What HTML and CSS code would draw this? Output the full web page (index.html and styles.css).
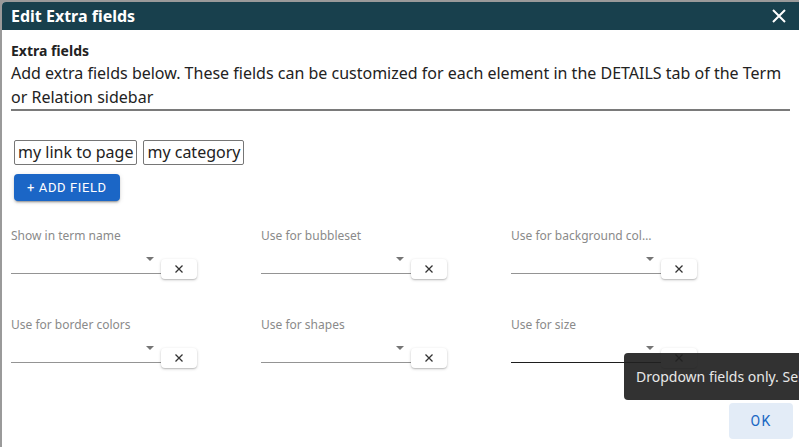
FILE: index.html
```html
<!DOCTYPE html>
<html lang="en">
<head>
<meta charset="utf-8">
<title>Edit Extra fields</title>
<link rel="stylesheet" href="styles.css">
</head>
<body>
<div class="dialog">
  <header class="titlebar">
    <h1 class="title">Edit Extra fields</h1>
    <button class="close" aria-label="Close">
      <svg width="14" height="14" viewBox="0 0 14 14"><path d="M1 1 L13 13 M13 1 L1 13" stroke="#fff" stroke-width="2" fill="none"/></svg>
    </button>
  </header>
  <main class="content">
    <div class="section-label">Extra fields</div>
    <p class="description">Add extra fields below. These fields can be customized for each element in the DETAILS tab of the Term or Relation sidebar</p>
    <div class="field-names">
      <span class="field-name">my link to page</span>
      <span class="field-name">my category</span>
    </div>
    <button class="add-field">+ ADD FIELD</button>
    <div class="mapping-grid">
      <div class="mapping">
        <label class="mapping-label">Show in term name</label>
        <div class="mapping-control">
          <div class="select"><span class="arrow"></span></div>
          <button class="clear" aria-label="Clear"><svg width="8" height="8" viewBox="0 0 8 8"><path d="M0.5 0.5 L7.5 7.5 M7.5 0.5 L0.5 7.5" stroke="#333" stroke-width="1.3" fill="none"/></svg></button>
        </div>
      </div>
      <div class="mapping">
        <label class="mapping-label">Use for bubbleset</label>
        <div class="mapping-control">
          <div class="select"><span class="arrow"></span></div>
          <button class="clear" aria-label="Clear"><svg width="8" height="8" viewBox="0 0 8 8"><path d="M0.5 0.5 L7.5 7.5 M7.5 0.5 L0.5 7.5" stroke="#333" stroke-width="1.3" fill="none"/></svg></button>
        </div>
      </div>
      <div class="mapping">
        <label class="mapping-label">Use for background colors</label>
        <div class="mapping-control">
          <div class="select"><span class="arrow"></span></div>
          <button class="clear" aria-label="Clear"><svg width="8" height="8" viewBox="0 0 8 8"><path d="M0.5 0.5 L7.5 7.5 M7.5 0.5 L0.5 7.5" stroke="#333" stroke-width="1.3" fill="none"/></svg></button>
        </div>
      </div>
      <div class="mapping">
        <label class="mapping-label">Use for border colors</label>
        <div class="mapping-control">
          <div class="select"><span class="arrow"></span></div>
          <button class="clear" aria-label="Clear"><svg width="8" height="8" viewBox="0 0 8 8"><path d="M0.5 0.5 L7.5 7.5 M7.5 0.5 L0.5 7.5" stroke="#333" stroke-width="1.3" fill="none"/></svg></button>
        </div>
      </div>
      <div class="mapping">
        <label class="mapping-label">Use for shapes</label>
        <div class="mapping-control">
          <div class="select"><span class="arrow"></span></div>
          <button class="clear" aria-label="Clear"><svg width="8" height="8" viewBox="0 0 8 8"><path d="M0.5 0.5 L7.5 7.5 M7.5 0.5 L0.5 7.5" stroke="#333" stroke-width="1.3" fill="none"/></svg></button>
        </div>
      </div>
      <div class="mapping">
        <label class="mapping-label">Use for size</label>
        <div class="mapping-control">
          <div class="select select-hover"><span class="arrow"></span></div>
          <button class="clear" aria-label="Clear"><svg width="8" height="8" viewBox="0 0 8 8"><path d="M0.5 0.5 L7.5 7.5 M7.5 0.5 L0.5 7.5" stroke="#333" stroke-width="1.3" fill="none"/></svg></button>
        </div>
      </div>
    </div>
  </main>
  <footer class="actions">
    <button class="ok">OK</button>
  </footer>
  <div class="tooltip" role="tooltip">Dropdown fields only. Select a field to use it here.</div>
</div>
</body>
</html>
```
FILE: styles.css
```css
html, body {
  margin: 0;
  padding: 0;
}
body {
  width: 799px;
  height: 447px;
  overflow: hidden;
  background: #9a9a9a;
  font-family: "Noto Sans", "Open Sans", sans-serif;
}
.dialog {
  position: relative;
  margin: 2px 0 0 2px;
  width: 797px;
  height: 445px;
  background: #fff;
  display: flex;
  flex-direction: column;
  border-radius: 4px 0 0 0;
  overflow: hidden;
}
.titlebar {
  height: 28px;
  flex: none;
  background: #18404d;
  display: flex;
  align-items: center;
  justify-content: space-between;
  padding: 0 13px 0 9px;
}
.title {
  margin: 0;
  font-size: 16px;
  font-weight: 700;
  line-height: 28px;
  color: #fff;
}
.close {
  width: 14px;
  height: 14px;
  padding: 0;
  border: 0;
  background: none;
  display: flex;
}
.content {
  flex: 1;
  padding: 11px 9px 0 9px;
  display: flex;
  flex-direction: column;
  align-items: flex-start;
  color: #222;
}
.section-label {
  font-size: 14px;
  font-weight: 700;
  line-height: 20px;
}
.description {
  margin: 0;
  align-self: stretch;
  font-size: 16px;
  line-height: 24px;
  border-bottom: 2px solid #7a7a7a;
}
.field-names {
  display: flex;
  gap: 6px;
  margin-top: 29px;
  padding-left: 3px;
}
.field-name {
  border: 1px solid #767676;
  border-radius: 2px;
  padding: 1px 3px;
  font-size: 16px;
  line-height: 21px;
}
.add-field {
  margin-top: 9px;
  margin-left: 3px;
  height: 27px;
  padding: 0 13px;
  border: 0;
  border-radius: 4px;
  background: #1b66c6;
  color: #fff;
  font-family: Roboto, "Noto Sans", sans-serif;
  font-size: 13px;
  font-weight: 400;
  letter-spacing: 0.6px;
  box-shadow: 0 3px 1px -2px rgba(0,0,0,.2), 0 2px 2px rgba(0,0,0,.14), 0 1px 5px rgba(0,0,0,.12);
}
.mapping-grid {
  margin-top: 25px;
  display: grid;
  grid-template-columns: repeat(3, 250px);
  row-gap: 36px;
}
.mapping-label {
  display: block;
  max-width: 144px;
  padding-top: 2px;
  font-size: 12px;
  line-height: 16px;
  color: #8a8a8a;
  white-space: nowrap;
  overflow: hidden;
  text-overflow: ellipsis;
}
.mapping-control {
  display: flex;
  align-items: flex-start;
}
.select {
  box-sizing: border-box;
  width: 150px;
  height: 30px;
  border-bottom: 1px solid #949494;
  display: flex;
  align-items: center;
  justify-content: flex-end;
  padding-right: 7px;
}
.select-hover {
  border-bottom-color: #1e1e1e;
}
.arrow {
  width: 0;
  height: 0;
  border-left: 4.5px solid transparent;
  border-right: 4.5px solid transparent;
  border-top: 4.5px solid #757575;
}
.clear {
  margin-top: 15px;
  width: 36px;
  height: 20px;
  padding: 0;
  border: 0;
  border-radius: 4px;
  background: #fff;
  display: flex;
  align-items: center;
  justify-content: center;
  box-shadow: 0 1px 3px rgba(0,0,0,.22), 0 1px 1px rgba(0,0,0,.1);
}
.actions {
  flex: none;
  display: flex;
  justify-content: flex-end;
  padding: 0 6px 8px 0;
}
.ok {
  width: 64px;
  height: 36px;
  padding: 0;
  border: 0;
  border-radius: 4px;
  background: #e3ecf7;
  color: #1a68c4;
  font-family: Roboto, "Noto Sans", sans-serif;
  font-size: 14px;
  font-weight: 400;
  letter-spacing: 1.2px;
}
.tooltip {
  position: absolute;
  left: 622px;
  top: 351px;
  height: 47px;
  padding: 0 16px 0 12px;
  display: flex;
  align-items: center;
  background: rgba(33,33,33,.92);
  color: #e8e8e8;
  font-size: 14px;
  border-radius: 4px;
  white-space: nowrap;
}
```
